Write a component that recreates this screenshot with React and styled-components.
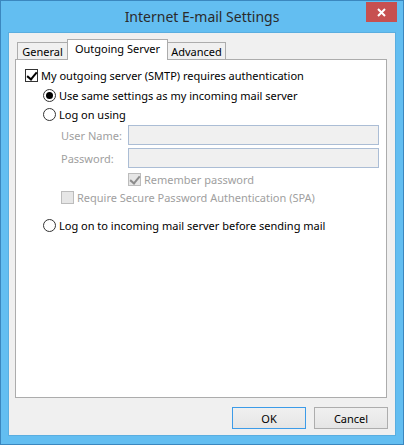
import React from 'react'
import styled, { createGlobalStyle } from 'styled-components';

const Global = createGlobalStyle`
    html, body { margin: 0; padding: 0; background: #ffffff; }
    body { font-family: "Noto Sans", "Open Sans", sans-serif; }
`

const App = () => (
<Window>
    <Global />
    <TitleBar>
        <span />
        <Title>Internet E-mail Settings</Title>
        <Close>
            <svg width="9" height="9" viewBox="0 0 9 9">
                <path d="M1 1 L8 8 M8 1 L1 8" stroke="#fff" strokeWidth="2" />
            </svg>
        </Close>
    </TitleBar>
    <Client>
        <Tabs>
            <Tab $w={51}>General</Tab>
            <Tab $w={101} $active>Outgoing Server</Tab>
            <Tab $w={59}>Advanced</Tab>
        </Tabs>
        <Panel>
            <Row $top={5} $indent={9}>
                <Check $checked />
                <Label>My outgoing server (SMTP) requires authentication</Label>
            </Row>
            <Row $indent={27}>
                <Radio $checked />
                <Label>Use same settings as my incoming mail server</Label>
            </Row>
            <Row $indent={27} $h={19}>
                <Radio />
                <Label>Log on using</Label>
            </Row>
            <Row $top={1} $indent={45}>
                <FieldName>User Name:</FieldName>
                <Field />
            </Row>
            <Row $top={3} $indent={45}>
                <FieldName>Password:</FieldName>
                <Field />
            </Row>
            <Row $top={2} $indent={112} $h={18}>
                <Check $checked $disabled />
                <Label $disabled>Remember password</Label>
            </Row>
            <Row $indent={45} $h={18}>
                <Check $disabled />
                <Label $disabled>Require Secure Password Authentication (SPA)</Label>
            </Row>
            <Row $top={9} $indent={27}>
                <Radio />
                <Label>Log on to incoming mail server before sending mail</Label>
            </Row>
        </Panel>
        <Buttons>
            <Button $default>OK</Button>
            <Button>Cancel</Button>
        </Buttons>
    </Client>
</Window>
);

export default App

const Window = styled.div`
    width: 404px;
    height: 445px;
    box-sizing: border-box;
    border: 1px solid #3b87bf;
    background: #63bef1;
    padding: 0 7px 8px 7px;
    display: flex;
    flex-direction: column;
`

const TitleBar = styled.div`
    height: 31px;
    display: grid;
    grid-template-columns: 1fr auto 1fr;
    align-items: start;
`

const Title = styled.div`
    font-family: "Noto Sans", "Open Sans", sans-serif;
    font-size: 14px;
    color: #2b2b2b;
    line-height: 31px;
`

const Close = styled.div`
    justify-self: end;
    margin-right: -1px;
    margin-top: 1px;
    width: 31px;
    height: 20px;
    background: #c75050;
    display: flex;
    align-items: center;
    justify-content: center;
`

const Client = styled.div`
    flex: 1;
    background: #f0f0f0;
    border: 1px solid #5aaee0;
    padding: 6px 8px 6px 6px;
    display: flex;
    flex-direction: column;
    font-size: 11px;
    color: #000;
`

const Tabs = styled.div`
    display: flex;
    align-items: flex-end;
    height: 21px;
    margin: 0 0 -1px 2px;
    position: relative;
    z-index: 1;
`

const Tab = styled.div`
    box-sizing: border-box;
    width: ${p => p.$w}px;
    height: ${p => (p.$active ? 21 : 18)}px;
    margin-left: -1px;
    &:first-child { margin-left: 0; }
    border: 1px solid #acacac;
    border-bottom: ${p => (p.$active ? 'none' : '1px solid #acacac')};
    background: ${p => (p.$active ? '#ffffff' : '#f0f0f0')};
    text-align: center;
    line-height: ${p => (p.$active ? 18 : 17)}px;
`

const Panel = styled.div`
    flex: 1;
    background: #ffffff;
    border: 1px solid #acacac;
    display: flex;
    flex-direction: column;
`

const Row = styled.div`
    display: flex;
    align-items: center;
    height: ${p => p.$h || 20}px;
    margin-top: ${p => p.$top || 0}px;
    padding-left: ${p => p.$indent}px;
`

const Check = styled.span`
    box-sizing: border-box;
    width: 13px;
    height: 13px;
    flex: none;
    border: 1px solid ${p => (p.$disabled ? '#bcbcbc' : '#333333')};
    background: ${p => (p.$disabled ? '#e6e6e6' : '#ffffff')};
    position: relative;
    &::after {
        content: '';
        display: ${p => (p.$checked ? 'block' : 'none')};
        position: absolute;
        left: 3px;
        top: 0px;
        width: 4px;
        height: 8px;
        border: solid ${p => (p.$disabled ? '#8c8c8c' : '#000000')};
        border-width: 0 2px 2px 0;
        transform: rotate(40deg);
    }
`

const Radio = styled.span`
    box-sizing: border-box;
    width: 13px;
    height: 13px;
    flex: none;
    border-radius: 50%;
    border: 1px solid #333333;
    background: #ffffff;
    display: flex;
    align-items: center;
    justify-content: center;
    &::after {
        content: '';
        display: ${p => (p.$checked ? 'block' : 'none')};
        width: 7px;
        height: 7px;
        border-radius: 50%;
        background: #000000;
    }
`

const Label = styled.span`
    margin-left: 3px;
    white-space: nowrap;
    color: ${p => (p.$disabled ? '#a0a0a0' : '#000000')};
`

const FieldName = styled.span`
    width: 67px;
    flex: none;
    color: #a0a0a0;
`

const Field = styled.div`
    box-sizing: border-box;
    width: 251px;
    height: 20px;
    border: 1px solid #abbdd5;
    background: #f0f0f0;
`

const Buttons = styled.div`
    display: flex;
    justify-content: flex-end;
    gap: 8px;
    margin-top: 9px;
    margin-right: -1px;
`

const Button = styled.div`
    box-sizing: border-box;
    width: 74px;
    height: 22px;
    border: 1px solid ${p => (p.$default ? '#3c9be8' : '#adadad')};
    background: linear-gradient(#f0f0f0, #e5e5e5);
    display: flex;
    align-items: center;
    justify-content: center;
`
